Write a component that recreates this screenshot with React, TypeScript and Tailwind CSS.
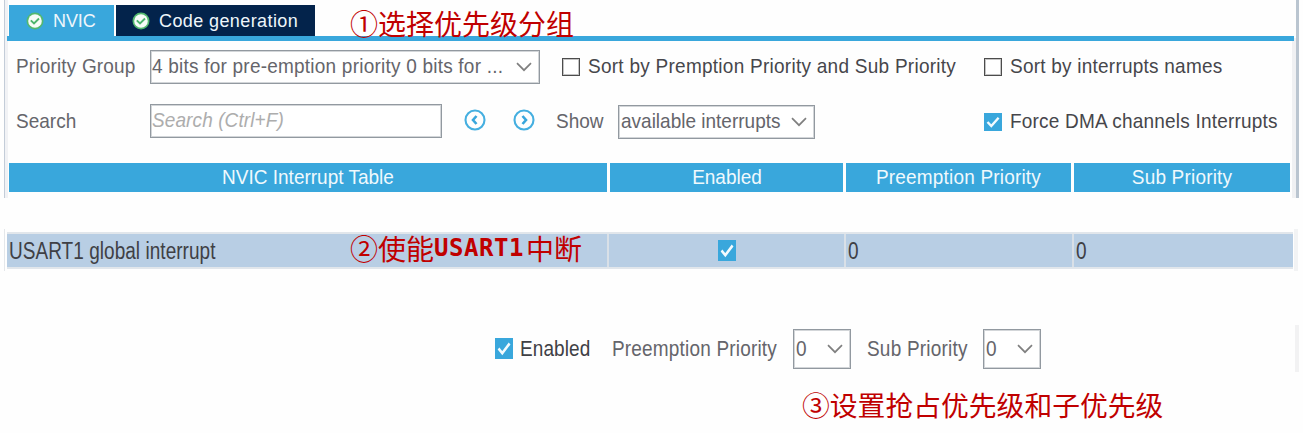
import React from "react";

function Check({ className = "" }: { className?: string }) {
  return (
    <span className={`block shrink-0 bg-[#39a7dc] ${className}`}>
      <svg viewBox="0 0 18 18" preserveAspectRatio="none" className="block h-full w-full">
        <path d="M3.5 9 7.3 13 14.6 4.7" fill="none" stroke="#f4fbfe" strokeWidth="2.4" />
      </svg>
    </span>
  );
}

function EmptyBox() {
  return (
    <span className="block size-[18px] shrink-0 border border-[#4c4c4c] bg-white shadow-[inset_0_0_0_1px_#c4c4c4]" />
  );
}

function Chevron() {
  return (
    <svg width="16" height="10" viewBox="0 0 16 10" className="block shrink-0">
      <path d="M1 1.2 8 8.2 15 1.2" fill="none" stroke="#808080" strokeWidth="1.7" />
    </svg>
  );
}

function TabIcon() {
  return (
    <svg width="18" height="18" viewBox="0 0 18 18" className="block shrink-0">
      <circle cx="9" cy="9" r="8.5" fill="#53b86f" />
      <circle cx="9" cy="9" r="6.8" fill="#f7fcf8" />
      <path d="M4.8 8.4 8 11.5 13 6.5" fill="none" stroke="#4db56d" strokeWidth="1.9" />
    </svg>
  );
}

function ArrowCircle({ next = false }: { next?: boolean }) {
  return (
    <svg width="22" height="22" viewBox="0 0 22 22" className="block shrink-0">
      <circle cx="11" cy="11" r="9.5" fill="none" stroke="#45afe0" strokeWidth="2.1" />
      <path
        d={next ? "M9.5 7 13 11 9.5 15" : "M12.5 7 9 11 12.5 15"}
        fill="none"
        stroke="#38a6dc"
        strokeWidth="2.6"
      />
    </svg>
  );
}

function SideEdges({ faint = false }: { faint?: boolean }) {
  return faint ? (
    <>
      <span className="absolute inset-y-0 left-1 w-px bg-[#e4e7ea]" />
      <span className="absolute inset-y-0 right-[5px] w-1 bg-[#f2f3f4]" />
    </>
  ) : (
    <>
      <span className="absolute inset-y-0 left-1 w-1 border-l border-[#c3ccd8] bg-[#f1f2f5]" />
      <span className="absolute bottom-0 right-[7px] top-[38px] w-1 bg-[#f0f1f3]" />
      <span className="absolute inset-y-0 right-1 w-[3px] bg-[#bac5d0]" />
    </>
  );
}

const note = "font-['Noto_Sans_CJK_SC',sans-serif] font-normal text-[#c00000] whitespace-nowrap";
const field = "flex items-center border border-[#9299a0] bg-white shadow-[inset_0_0_0_1px_#d3d6d9]";
const tall = "scale-y-[1.07]";

export default function App() {
  return (
    <main className="h-[433px] w-[1303px] overflow-hidden bg-[#fefefe] font-['Liberation_Sans',Arial,sans-serif] text-[19px] leading-6 whitespace-nowrap text-[#65656b]">
      <section className="relative h-[198px] pt-[5px]">
        <SideEdges />
        <div className="ml-[9px] flex h-[31px] gap-[2px] text-[18px] text-[#eef6fb]">
          <div className="flex w-[105px] items-center bg-[#39a7dc] pl-[17px]">
            <TabIcon />
            <span className={`ml-[9px] tracking-[-0.1px] ${tall}`}>NVIC</span>
          </div>
          <div className="flex w-[199px] items-center bg-[#03234b] pl-4">
            <TabIcon />
            <span className={`ml-[9px] tracking-[0.4px] ${tall}`}>Code generation</span>
          </div>
        </div>
        <div className="relative ml-[7px] h-[5px] w-[1287px] bg-[#39a7dc]" />

        <div className="mt-[9px] flex h-[34px] items-center pl-[15px]">
          <span className={`w-[135px] pl-px tracking-[0.17px] ${tall}`}>Priority Group</span>
          <div className={`h-[34px] w-[390px] justify-between pl-px pr-[7px] ${field}`}>
            <span className={`tracking-[0.22px] ${tall}`}>4 bits for pre-emption priority 0 bits for ...</span>
            <Chevron />
          </div>
          <div className="ml-[22px] flex w-[422px] items-center gap-2 text-[#46464b]">
            <EmptyBox />
            <span className={`tracking-[0.26px] ${tall}`}>Sort by Premption Priority and Sub Priority</span>
          </div>
          <div className="flex items-center gap-2 text-[#46464b]">
            <EmptyBox />
            <span className={`tracking-[0.23px] ${tall}`}>Sort by interrupts names</span>
          </div>
        </div>

        <div className="mt-5 flex h-[35px] items-center pl-[15px]">
          <span className={`w-[135px] pl-px pt-px ${tall}`}>Search</span>
          <div className={`h-[34px] w-[292px] self-start pl-px text-[#adadad] italic ${field}`}>
            <span className={`pb-px tracking-[0.1px] ${tall}`}>Search (Ctrl+F)</span>
          </div>
          <div className="ml-[22px] flex gap-[27px] pb-[3px]">
            <ArrowCircle />
            <ArrowCircle next />
          </div>
          <span className={`ml-5 w-[63px] pl-px pt-px ${tall}`}>Show</span>
          <div className={`h-[34px] w-[197px] justify-between self-end pl-[2px] pr-[7px] ${field}`}>
            <span className={tall}>available interrupts</span>
            <Chevron />
          </div>
          <div className="ml-[169px] flex items-center gap-2 text-[#46464b]">
            <Check className="size-[18px]" />
            <span className={`tracking-[0.2px] ${tall}`}>Force DMA channels Interrupts</span>
          </div>
        </div>

        <div className="mt-6 ml-[9px] grid h-[29px] w-[1281px] grid-cols-[598px_233px_225px_216px] gap-[3px] text-center leading-[29px] text-[#f0f9fd]">
          <div className="bg-[#39a7dc]">
            <span className={`inline-block ${tall}`}>NVIC Interrupt Table</span>
          </div>
          <div className="bg-[#39a7dc]">
            <span className={`inline-block pl-px ${tall}`}>Enabled</span>
          </div>
          <div className="bg-[#39a7dc]">
            <span className={`inline-block tracking-[0.18px] ${tall}`}>Preemption Priority</span>
          </div>
          <div className="bg-[#39a7dc]">
            <span className={`inline-block tracking-[0.18px] ${tall}`}>Sub Priority</span>
          </div>
        </div>
        <p className={`absolute left-[350px] top-[3px] text-[28px] leading-[40px] ${note}`}>①选择优先级分组</p>
      </section>

      <section className="relative mt-[31px] h-[42px] pt-[3px]">
        <SideEdges faint />
        <div className="relative ml-[7px] grid h-[37px] w-[1286px] grid-cols-[602px_237px_228px_219px] border-y-2 border-[#e1e6eb] bg-[#b8cee4] text-[#3f4045]">
          <div className="flex items-center border-r-2 border-[#d9e0e7] pl-[2px] pt-[2px]">
            <span className="inline-block scale-y-[1.22] tracking-[0.04px]">USART1 global interrupt</span>
          </div>
          <div className="flex items-center justify-center border-r-2 border-[#d9e0e7]">
            <Check className="h-[21px] w-[18px]" />
          </div>
          <div className="flex items-center border-r-2 border-[#d9e0e7] pl-[2px] pt-[2px]">
            <span className="inline-block scale-y-[1.22]">0</span>
          </div>
          <div className="flex items-center pl-[2px] pt-[2px]">
            <span className="inline-block scale-y-[1.22]">0</span>
          </div>
        </div>
        <p className={`absolute left-[350px] -top-px flex items-center text-[28px] leading-[40px] ${note}`}>
          <span>②使能</span>
          <span className="font-['DejaVu_Sans_Mono',monospace] text-[24px] font-bold tracking-[0.55px]">USART1</span>
          <span className="ml-[2px]">中断</span>
        </p>
      </section>

      <section className="relative mt-[54px] flex h-[47px] items-center pl-[495px]">
        <span className="absolute inset-y-0 right-1 w-1 bg-[#f2f2f3]" />
        <Check className="h-[21px] w-[18px]" />
        <span className="ml-[7px] w-[91px] scale-y-[1.18] tracking-[0.1px] text-[#3f4045]">Enabled</span>
        <span className="w-[182px] scale-y-[1.18] pl-px tracking-[0.18px]">Preemption Priority</span>
        <div className={`h-10 w-[58px] justify-between pl-[2px] pr-[7px] ${field}`}>
          <span className="scale-y-[1.18]">0</span>
          <Chevron />
        </div>
        <span className="ml-[15px] w-[117px] scale-y-[1.18] pl-px tracking-[0.2px]">Sub Priority</span>
        <div className={`h-10 w-[58px] justify-between pl-[2px] pr-[7px] ${field}`}>
          <span className="scale-y-[1.18]">0</span>
          <Chevron />
        </div>
      </section>

      <p className={`mt-3 pl-[802px] text-[27.8px] leading-[40px] ${note}`}>③设置抢占优先级和子优先级</p>
    </main>
  );
}
